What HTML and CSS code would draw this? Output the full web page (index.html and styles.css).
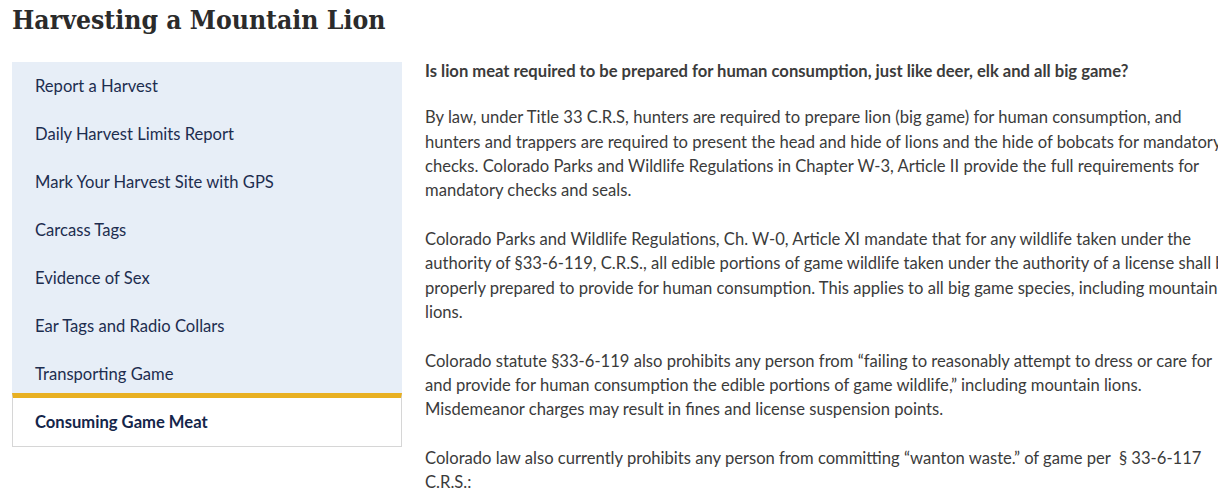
FILE: index.html
```html
<!DOCTYPE html>
<html lang="en">
<head>
<meta charset="utf-8">
<title>Harvesting a Mountain Lion</title>
<link rel="stylesheet" href="styles.css">
</head>
<body>
<div class="page">
  <h1 class="title">Harvesting a Mountain Lion</h1>
  <div class="layout">
    <nav class="sidenav">
      <ul class="sidenav-list">
        <li class="sidenav-item"><a href="#">Report a Harvest</a></li>
        <li class="sidenav-item"><a href="#">Daily Harvest Limits Report</a></li>
        <li class="sidenav-item"><a href="#">Mark Your Harvest Site with GPS</a></li>
        <li class="sidenav-item"><a href="#">Carcass Tags</a></li>
        <li class="sidenav-item"><a href="#">Evidence of Sex</a></li>
        <li class="sidenav-item"><a href="#">Ear Tags and Radio Collars</a></li>
        <li class="sidenav-item"><a href="#">Transporting Game</a></li>
        <li class="sidenav-item is-active"><a href="#">Consuming Game Meat</a></li>
      </ul>
    </nav>
    <main class="content">
      <p class="question">Is lion meat required to be prepared for human consumption, just like deer, elk and all big game?</p>
      <p>By law, under Title 33 C.R.S, hunters are required to prepare lion (big game) for human consumption, and hunters and trappers are required to present the head and hide of lions and the hide of bobcats for mandatory checks. Colorado Parks and Wildlife Regulations in Chapter W-3, Article II provide the full requirements for mandatory checks and seals.</p>
      <p>Colorado Parks and Wildlife Regulations, Ch. W-0, Article XI mandate that for any wildlife taken under the authority of §33-6-119, C.R.S., all edible portions of game wildlife taken under the authority of a license shall be properly prepared to provide for human consumption. This applies to all big game species, including mountain lions.</p>
      <p>Colorado statute §33-6-119 also prohibits any person from “failing to reasonably attempt to dress or care for and provide for human consumption the edible portions of game wildlife,” including mountain lions. Misdemeanor charges may result in fines and license suspension points.</p>
      <p>Colorado law also currently prohibits any person from committing “wanton waste.” of game per &nbsp;§ 33-6-117 C.R.S.:</p>
    </main>
  </div>
</div>
</body>
</html>
```

FILE: styles.css
```css
html, body {
  margin: 0;
  padding: 0;
  background: #ffffff;
  overflow: hidden;
}
body {
  font-family: Lato, "Open Sans", sans-serif;
  color: #3b3b3b;
}
.page {
  padding: 0 0 0 12px;
  width: 1250px;
}
.title {
  margin: 0;
  padding-top: 2px;
  height: 60px;
  font-family: "DejaVu Serif Condensed", "DejaVu Serif", "Liberation Serif", serif;
  font-stretch: condensed;
  font-weight: 700;
  font-size: 26.3px;
  line-height: 36px;
  color: #2b2b2b;
}
.layout {
  display: flex;
  align-items: flex-start;
  gap: 23px;
}
.sidenav {
  flex: 0 0 390px;
  background: #e7eef7;
}
.sidenav-list {
  list-style: none;
  margin: 0;
  padding: 0;
}
.sidenav-item a {
  display: block;
  height: 48px;
  line-height: 48px;
  padding: 0 0 0 23px;
  font-size: 16.6px;
  color: #1d2d4f;
  text-decoration: none;
}
.sidenav-item.is-active {
  margin-top: -5px;
  background: #ffffff;
  border: 1px solid #d6d6d6;
  border-top: 5px solid #e8b022;
}
.sidenav-item.is-active a {
  padding-left: 22px;
  font-weight: 700;
  color: #14254a;
}
.content {
  flex: 0 0 814px;
  width: 814px;
  margin-top: -3px;
  font-size: 16.6px;
  line-height: 24.3px;
}
.content p {
  margin: 0 0 24.5px;
}
.content .question {
  font-weight: 700;
  margin-bottom: 22px;
}
```
